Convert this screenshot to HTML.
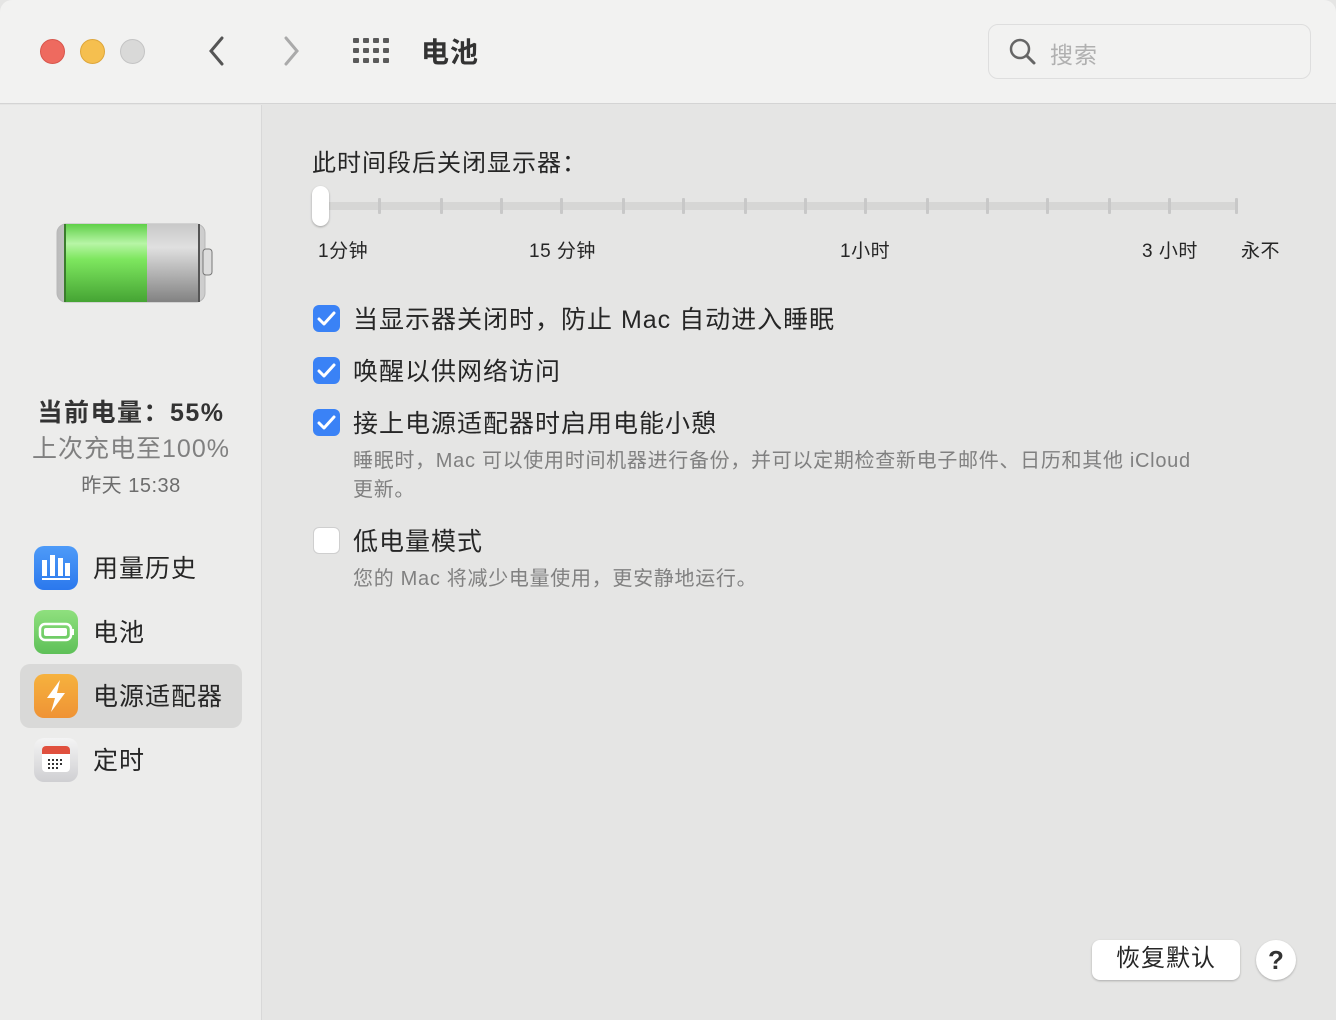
<!DOCTYPE html>
<html><head><meta charset="utf-8"><style>
*{margin:0;padding:0;box-sizing:border-box}
body{width:1336px;height:1020px;overflow:hidden;background:#e5e5e4;font-family:"Liberation Sans","Noto Sans CJK SC",sans-serif;color:#262626;position:relative}
.a{position:absolute}
.tb{left:0;top:0;width:1336px;height:104px;background:#f2f2f1;border-bottom:1px solid #d4d4d4;border-radius:12px 12px 0 0}
.side{left:0;top:105px;width:262px;height:915px;background:#ececeb;border-right:1px solid #d8d8d8}
.dot{width:25px;height:25px;border-radius:50%;top:39px}
.cb{width:27px;height:27px;border-radius:6px;background:#3a82f6;left:313px}
.cb svg{position:absolute;left:4px;top:5px}
.lbl{font-size:25px;left:353px;letter-spacing:1px}
.sub{font-size:20px;color:#808080;left:353px;line-height:29px;letter-spacing:0.7px}
.tick{width:3px;height:16px;background:#c8c8c8;top:198px;border-radius:1px}
.sl{font-size:19px;top:236px;letter-spacing:.5px}
.ic{width:44px;height:44px;border-radius:10px;left:34px}
.it{font-size:25px;left:93px;letter-spacing:1px}
</style></head><body>
<div class="a tb"></div>
<div class="a dot" style="left:40px;background:#ee6a5f;border:1px solid #d8564c"></div>
<div class="a dot" style="left:80px;background:#f5bf4f;border:1px solid #dea63a"></div>
<div class="a dot" style="left:120px;background:#d9d9d8;border:1px solid #c4c4c4"></div>
<svg class="a" style="left:204px;top:35px" width="24" height="32"><path d="M18 3 L7 16 L18 29" fill="none" stroke="#555" stroke-width="3" stroke-linecap="round"/></svg>
<svg class="a" style="left:280px;top:35px" width="24" height="32"><path d="M6 3 L17 16 L6 29" fill="none" stroke="#aaa" stroke-width="3" stroke-linecap="round"/></svg>
<svg class="a" style="left:353px;top:38px" width="38" height="28" fill="#5a5a5a">
<rect x="0" y="0" width="6" height="5" rx="1"/><rect x="10" y="0" width="6" height="5" rx="1"/><rect x="20" y="0" width="6" height="5" rx="1"/><rect x="30" y="0" width="6" height="5" rx="1"/>
<rect x="0" y="10" width="6" height="5" rx="1"/><rect x="10" y="10" width="6" height="5" rx="1"/><rect x="20" y="10" width="6" height="5" rx="1"/><rect x="30" y="10" width="6" height="5" rx="1"/>
<rect x="0" y="20" width="6" height="5" rx="1"/><rect x="10" y="20" width="6" height="5" rx="1"/><rect x="20" y="20" width="6" height="5" rx="1"/><rect x="30" y="20" width="6" height="5" rx="1"/></svg>
<div class="a" style="left:421px;top:31px;font-size:28px;font-weight:bold;color:#333;letter-spacing:1px">电池</div>
<div class="a" style="left:988px;top:24px;width:323px;height:55px;border:1px solid #dedede;border-radius:10px;background:#f2f2f1"></div>
<svg class="a" style="left:1008px;top:37px" width="30" height="30"><circle cx="12" cy="12" r="9" fill="none" stroke="#666" stroke-width="2.5"/><path d="M19 19 L26 26" stroke="#666" stroke-width="3" stroke-linecap="round"/></svg>
<div class="a" style="left:1050px;top:36px;font-size:23px;color:#b0b0b0;letter-spacing:1px">搜索</div>

<div class="a side"></div>
<svg class="a" style="left:56px;top:223px" width="160" height="82">
<defs><linearGradient id="g" x1="0" y1="0" x2="0" y2="1"><stop offset="0" stop-color="#5fd048"/><stop offset=".25" stop-color="#b7f5a6"/><stop offset=".45" stop-color="#7ee75f"/><stop offset="1" stop-color="#45a434"/></linearGradient>
<linearGradient id="s" x1="0" y1="0" x2="0" y2="1"><stop offset="0" stop-color="#c8c8c8"/><stop offset=".3" stop-color="#e0e0e0"/><stop offset="1" stop-color="#828282"/></linearGradient>
<linearGradient id="r" x1="0" y1="0" x2="1" y2="0"><stop offset="0" stop-color="#bbb"/><stop offset=".5" stop-color="#fff"/><stop offset="1" stop-color="#ccc"/></linearGradient></defs>
<rect x="1" y="1" width="148" height="78" rx="9" fill="url(#r)" stroke="#b8b8b8"/>
<rect x="9" y="1" width="82" height="78" fill="url(#g)"/>
<rect x="91" y="1" width="52" height="78" fill="url(#s)"/>
<rect x="8" y="1" width="2" height="78" fill="#3b7d2d"/>
<rect x="142" y="1" width="2" height="78" fill="#555"/>
<rect x="147" y="26" width="9" height="26" rx="3" fill="#ddd" stroke="#777"/>
</svg>
<div class="a" style="left:0;width:262px;text-align:center;top:393px;font-size:25px;font-weight:bold;color:#333;letter-spacing:1.5px">当前电量：55%</div>
<div class="a" style="left:0;width:262px;text-align:center;top:429px;font-size:25px;color:#808080;letter-spacing:1px">上次充电至100%</div>
<div class="a" style="left:0;width:262px;text-align:center;top:469px;font-size:20px;color:#6d6d6d;letter-spacing:.5px">昨天 15:38</div>

<div class="a ic" style="top:546px;background:linear-gradient(#4e9bf8,#2b78ed)"><svg width="44" height="44" fill="#fff"><rect x="8" y="14" width="5" height="16"/><rect x="16" y="9" width="5" height="21"/><rect x="24" y="12" width="5" height="18"/><rect x="31" y="17" width="5" height="13"/><rect x="8" y="32" width="28" height="2"/></svg></div>
<div class="a it" style="top:549px">用量历史</div>
<div class="a ic" style="top:610px;background:linear-gradient(#8fe07e,#5ec058)"><svg width="44" height="44"><rect x="6" y="14" width="31" height="16" rx="5" fill="none" stroke="#fff" stroke-width="2.5"/><rect x="10" y="18" width="23" height="8" rx="2" fill="#fff"/><rect x="38" y="19" width="2" height="6" fill="#fff"/></svg></div>
<div class="a it" style="top:613px">电池</div>
<div class="a" style="left:20px;top:664px;width:222px;height:64px;background:#d9d9d8;border-radius:10px"></div>
<div class="a ic" style="top:674px;background:linear-gradient(#f6b23e,#ef9335)"><svg width="44" height="44"><path d="M26 6 L13 24 L21 24 L17 38 L31 19 L23 19 Z" fill="#fff"/></svg></div>
<div class="a it" style="top:677px">电源适配器</div>
<div class="a ic" style="top:738px;background:linear-gradient(#f4f4f4,#cfcfd2)"><svg width="44" height="44"><rect x="8" y="8" width="28" height="26" rx="4" fill="#fff"/><path d="M8 16 V12 a4 4 0 0 1 4 -4 h20 a4 4 0 0 1 4 4 V16 Z" fill="#e0503e"/><g fill="#333"><rect x="14" y="21" width="2" height="2"/><rect x="18" y="21" width="2" height="2"/><rect x="22" y="21" width="2" height="2"/><rect x="26" y="21" width="2" height="2"/><rect x="14" y="25" width="2" height="2"/><rect x="18" y="25" width="2" height="2"/><rect x="22" y="25" width="2" height="2"/><rect x="26" y="25" width="2" height="2"/><rect x="14" y="29" width="2" height="2"/><rect x="18" y="29" width="2" height="2"/><rect x="22" y="29" width="2" height="2"/></g></svg></div>
<div class="a it" style="top:741px">定时</div>

<div class="a" style="left:312px;top:143px;font-size:24px;letter-spacing:1px">此时间段后关闭显示器：</div>
<div class="a" style="left:320px;top:202px;width:918px;height:8px;background:#d6d6d5;border-radius:4px"></div>
<div class="a tick" style="left:378px"></div><div class="a tick" style="left:440px"></div><div class="a tick" style="left:500px"></div><div class="a tick" style="left:560px"></div><div class="a tick" style="left:622px"></div><div class="a tick" style="left:682px"></div><div class="a tick" style="left:744px"></div><div class="a tick" style="left:804px"></div><div class="a tick" style="left:864px"></div><div class="a tick" style="left:926px"></div><div class="a tick" style="left:986px"></div><div class="a tick" style="left:1046px"></div><div class="a tick" style="left:1108px"></div><div class="a tick" style="left:1168px"></div><div class="a tick" style="left:1235px"></div>
<div class="a" style="left:312px;top:186px;width:17px;height:40px;background:#fff;border-radius:9px;box-shadow:0 1px 2px rgba(0,0,0,.3)"></div>
<div class="a sl" style="left:318px">1分钟</div>
<div class="a sl" style="left:529px">15 分钟</div>
<div class="a sl" style="left:840px">1小时</div>
<div class="a sl" style="left:1142px">3 小时</div>
<div class="a sl" style="left:1241px">永不</div>

<div class="a cb" style="top:305px"><svg width="20" height="18"><path d="M2 9 L7 14 L17 3" fill="none" stroke="#fff" stroke-width="3" stroke-linecap="round" stroke-linejoin="round"/></svg></div>
<div class="a lbl" style="top:300px">当显示器关闭时，防止 Mac 自动进入睡眠</div>
<div class="a cb" style="top:357px"><svg width="20" height="18"><path d="M2 9 L7 14 L17 3" fill="none" stroke="#fff" stroke-width="3" stroke-linecap="round" stroke-linejoin="round"/></svg></div>
<div class="a lbl" style="top:352px">唤醒以供网络访问</div>
<div class="a cb" style="top:409px"><svg width="20" height="18"><path d="M2 9 L7 14 L17 3" fill="none" stroke="#fff" stroke-width="3" stroke-linecap="round" stroke-linejoin="round"/></svg></div>
<div class="a lbl" style="top:404px">接上电源适配器时启用电能小憩</div>
<div class="a sub" style="top:447px;width:960px">睡眠时，Mac 可以使用时间机器进行备份，并可以定期检查新电子邮件、日历和其他 iCloud<br>更新。</div>
<div class="a" style="left:313px;top:527px;width:27px;height:27px;border-radius:6px;background:#fff;border:1px solid #cfcfcf"></div>
<div class="a lbl" style="top:522px">低电量模式</div>
<div class="a sub" style="top:565px">您的 Mac 将减少电量使用，更安静地运行。</div>

<div class="a" style="left:1092px;top:940px;width:148px;height:40px;background:#fff;border-radius:8px;box-shadow:0 1px 2px rgba(0,0,0,.25);text-align:center;font-size:24px;line-height:38px;letter-spacing:1px">恢复默认</div>
<div class="a" style="left:1256px;top:940px;width:40px;height:40px;background:#fff;border-radius:50%;box-shadow:0 1px 2px rgba(0,0,0,.25);text-align:center;font-size:26px;line-height:40px;font-weight:bold;color:#333">?</div>
</body></html>
